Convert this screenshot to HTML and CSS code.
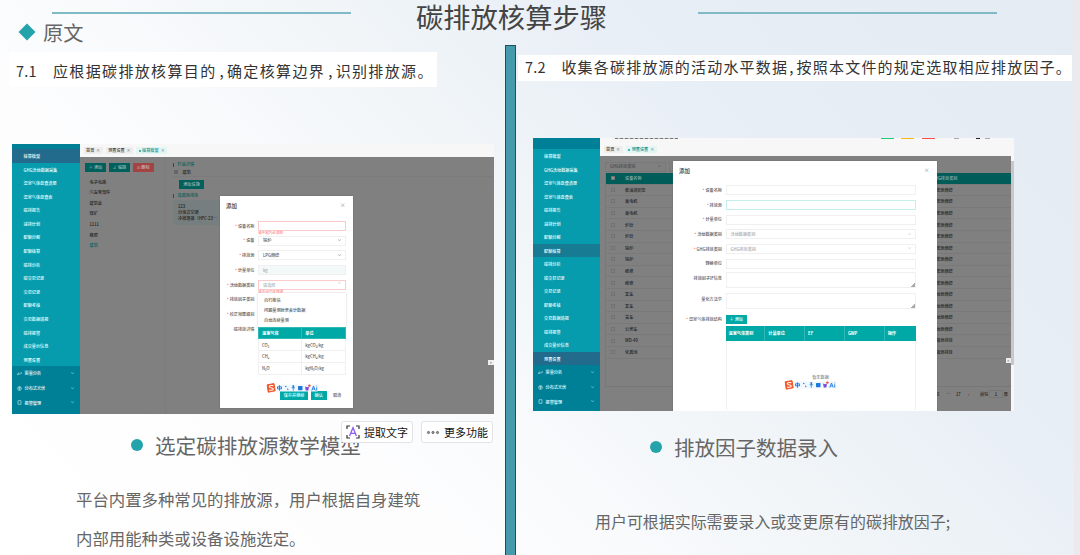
FILE: index.html
```html
<!DOCTYPE html>
<html lang="zh-CN">
<head>
  <meta charset="UTF-8">
  <meta name="viewport" content="width=device-width, initial-scale=1.0">
  <title>碳排放核算步骤</title>
  <link rel="stylesheet" href="styles.css">
</head>
<body>

  <svg class="defs" width="0" height="0">
    <symbol id="ime" viewBox="0 0 52 10">
      <rect x="11" y="1.5" width="41" height="7" rx="1" fill="#f1f7fe"/>
      <path d="M1.2 1.8 8 .6 9.2 7.8 2.2 9.2Z" fill="#f0592b" stroke="#f0592b" stroke-linejoin="round"/>
      <path d="M7.4 2.8C4.8 2.1 2.8 3 3.5 4.2 4.3 5.3 7.2 4.7 7.3 6 7.2 7.4 4.7 7.5 3.1 6.9" fill="none" stroke="#fff" stroke-width="1.1"/>
      <path d="M11.5 3.8h4v2h-4zM13.5 2.3v5.4" fill="none" stroke="#1c79db" stroke-width=".9"/>
      <path d="M19 3.6q1.2-1 1.5.5M21 6q1.2-.5 1 1.2" fill="none" stroke="#1c79db" stroke-width=".9"/>
      <path d="M27.3 2.2v2.8" fill="none" stroke="#1c79db" stroke-width="1.6"/>
      <path d="M25.6 4.5q1.7 2.4 3.4 0M27.3 6v1.8" fill="none" stroke="#1c79db" stroke-width=".7"/>
      <rect x="32" y="3" width="4.5" height="4.2" rx=".6" fill="#1c79db"/>
      <path d="M39 3.6 41 4.3 43 3.6 42.3 7.4H39.8Z" fill="#7b49d8"/>
      <circle cx="43.4" cy="2.6" r="1.2" fill="#f0483e"/>
      <path d="M45.8 7.5 47.5 3 49.2 7.5M46.4 6H48.6M50.7 4.3V7.5M50.7 2.6v.7" fill="none" stroke="#1c79db" stroke-width=".9"/>
    </symbol>
  </svg>

  <div class="slide">
    <header class="slide-head">
      <i class="rule"></i>
      <h1>碳排放核算步骤</h1>
      <i class="rule"></i>
    </header>

    <div class="columns">
      <section class="col col-left">
        <h2 class="origin"><i class="diamond"></i>原文</h2>
        <p class="quote"><b>7.1</b>应根据碳排放核算目的<s>,</s>确定核算边界<s>,</s>识别排放源。</p>

        <div class="shot shot-left">
          <aside class="side">
            <ul>
              <li class="on">核算模型</li><li>GHG活动数据采集</li><li>温室气体盘查清册</li><li>温室气体盘查表</li>
              <li>碳排报告</li><li>减排计划</li><li>配额分解</li><li>配额核算</li>
              <li>碳排分析</li><li>碳交易记录</li><li>交易记录</li><li>配额考核</li>
              <li>交易数据填报</li><li>碳排报警</li><li>成交量价信息</li><li>预置设置</li>
            </ul>
            <div class="groups">
              <p><svg viewBox="0 0 5 5"><path d="M.5 2.5V4M1.7 1.5V4M3 2V3.5M4.2 1V3"/></svg>需量分析<i class="chev"></i></p>
              <p><svg viewBox="0 0 5 5"><circle cx="2.5" cy="2.5" r="1.9"/><path d="M1 2h3M2.5.6v3.8"/></svg>分布式光伏<i class="chev"></i></p>
              <p><svg viewBox="0 0 5 5"><path d="M1 .7h3v3.6H1z"/></svg>报警管理<i class="chev"></i></p>
            </div>
          </aside>
          <div class="main">
            <div class="tabs">
              <span>首页 <em>×</em></span><span>预置设置 <em>×</em></span><span class="cur">核算模型 <em>×</em></span>
            </div>
            <div class="work">
              <div class="list">
                <div class="ops"><b>＋ 添加</b><b>∠ 编辑</b><b class="red">⊡ 删除</b></div>
                <ul>
                  <li>电子电路</li><li>汽车零部件</li><li>建筑业</li><li>煤矿</li><li>1111</li><li>橡胶</li><li class="teal">建筑</li>
                </ul>
              </div>
              <div class="detail">
                <p class="sec">行业详情</p>
                <p class="kind"><i></i>建筑</p>
                <b class="addbtn">添加设施</b>
                <p class="sec">选取源排放</p>
                <div class="card"><p>123</p><p>分体式空调</p><p>冷媒逸散（HFC-23…</p></div>
              </div>
            </div>
          </div>

          <div class="modal modal-a">
            <h3>添加<em>×</em></h3>
            <div class="row"><label class="req">设备名称</label><div class="inp bad"></div></div>
            <p class="err">请不能为必须的</p>
            <div class="row"><label class="req">设备</label><div class="inp">锅炉<i class="chev"></i></div></div>
            <div class="row"><label class="req">排放源</label><div class="inp">LPG燃烧<i class="chev"></i></div></div>
            <div class="row"><label class="req">计量单位</label><div class="inp off">kg</div></div>
            <div class="row"><label class="req">活动数据类别</label><div class="inp bad ph">请选择<i class="chev up"></i></div></div>
            <div class="row"><label class="req">排放因子类别</label></div>
            <div class="row"><label class="req">校正频率级别</label></div>
            <div class="row"><label>碳排放详情</label></div>
            <p class="err err-two">请活动气体强调</p>
            <div class="drop"><p>自行推估</p><p>问题量测财务会计数据</p><p>自动连续量测</p></div>
            <table class="gas">
              <tr><th>温室气体</th><th>单位</th></tr>
              <tr><td>CO₂</td><td>kgCO₂/kg</td></tr>
              <tr><td>CH₄</td><td>kgCH₄/kg</td></tr>
              <tr><td>N₂O</td><td>kgN₂O/kg</td></tr>
            </table>
            <div class="foot"><b>保存并继续</b><b>确认</b><b class="plain">取消</b></div>
            <svg class="ime"><use href="#ime"/></svg>
          </div>
          <i class="expand">»</i>
        </div>

        <h2 class="caption"><i class="dot"></i>选定碳排放源数学模型</h2>
        <p class="text">平台内置多种常见的排放源，用户根据自身建筑<br>内部用能种类或设备设施选定。</p>

        <div class="float-tools">
          <span><svg width="14" height="14" viewBox="0 0 14 14"><path d="M1 4V1H4M10 1H13V4M13 10V13H10M4 13H1V10" fill="none" stroke="#333" stroke-width="1.2"/><path d="M3.6 11 7 2.8 10.4 11M4.9 8.3H9.1" fill="none" stroke="#8b5cf0" stroke-width="1.3"/></svg>提取文字</span>
          <span><svg width="14" height="14" viewBox="0 0 14 14"><g fill="#999" stroke="#555" stroke-width=".8"><circle cx="2.5" cy="7.5" r="1.1"/><circle cx="7" cy="7.5" r="1.1"/><circle cx="11.5" cy="7.5" r="1.1"/></g></svg>更多功能</span>
        </div>
      </section>

      <i class="divider"></i>

      <section class="col col-right">
        <p class="quote"><b>7.2</b>收集各碳排放源的活动水平数据<s>,</s>按照本文件的规定选取相应排放因子。</p>

        <div class="shot shot-right">
          <aside class="side">
            <ul>
              <li>核算模型</li><li>GHG活动数据采集</li><li>温室气体盘查清册</li><li>温室气体盘查表</li>
              <li>碳排报告</li><li>减排计划</li><li>配额分解</li><li class="hover">配额核算</li>
              <li>碳排分析</li><li>碳交易记录</li><li>交易记录</li><li>配额考核</li>
              <li>交易数据填报</li><li>碳排报警</li><li>成交量价信息</li><li class="on">预置设置</li>
            </ul>
            <div class="groups">
              <p><svg viewBox="0 0 5 5"><path d="M.5 2.5V4M1.7 1.5V4M3 2V3.5M4.2 1V3"/></svg>需量分析<i class="chev"></i></p>
              <p><svg viewBox="0 0 5 5"><circle cx="2.5" cy="2.5" r="1.9"/><path d="M1 2h3M2.5.6v3.8"/></svg>分布式光伏<i class="chev"></i></p>
              <p><svg viewBox="0 0 5 5"><path d="M1 .7h3v3.6H1z"/></svg>报警管理<i class="chev"></i></p>
            </div>
          </aside>
          <div class="main">
            <div class="topbar">
              <i class="cut"></i><i class="chip green"></i><i class="chip amber"></i><i class="chip coral"></i><i class="mini"></i><i class="mini dark"></i><i class="mini near"></i>
            </div>
            <div class="tabs"><span>首页 <em>×</em></span><span class="cur">预置设置 <em>×</em></span></div>
            <div class="work">
              <div class="filter"><span>GHG排放类别<i class="chev"></i></span><span></span></div>
              <div class="grid">
                <div class="gr gh"><i></i><span>设备名称</span><span>GHG排放类别</span></div>
                <div class="gr"><i></i><span>柴油消防泵</span><span>固定源燃烧</span></div>
                <div class="gr"><i></i><span>发电机</span><span>固定源燃烧</span></div>
                <div class="gr"><i></i><span>发电机</span><span>固定源燃烧</span></div>
                <div class="gr"><i></i><span>炉灶</span><span>固定源燃烧</span></div>
                <div class="gr"><i></i><span>炉灶</span><span>固定源燃烧</span></div>
                <div class="gr"><i></i><span>锅炉</span><span>固定源燃烧</span></div>
                <div class="gr"><i></i><span>锅炉</span><span>固定源燃烧</span></div>
                <div class="gr"><i></i><span>维修</span><span>固定源燃烧</span></div>
                <div class="gr"><i></i><span>维修</span><span>固定源燃烧</span></div>
                <div class="gr"><i></i><span>叉车</span><span>移动源燃烧</span></div>
                <div class="gr"><i></i><span>叉车</span><span>移动源燃烧</span></div>
                <div class="gr"><i></i><span>货车</span><span>移动源燃烧</span></div>
                <div class="gr"><i></i><span>公务车</span><span>移动源燃烧</span></div>
                <div class="gr"><i></i><span>WD-40</span><span>逸散源排放</span></div>
                <div class="gr"><i></i><span>化粪池</span><span>逸散源排放</span></div>
              </div>
              <div class="pager"><b>6</b><b>…</b><b>17</b><b>›</b><span>前往</span><u>1</u><span>页</span></div>
            </div>
          </div>
          <div class="scroll"><i></i></div>

          <div class="modal modal-b">
            <h3>添加<em>×</em></h3>
            <div class="row"><label class="req">设备名称</label><div class="inp"></div></div>
            <div class="row"><label class="req">排放源</label><div class="inp focus"></div></div>
            <div class="row"><label class="req">计量单位</label><div class="inp"></div></div>
            <div class="row"><label class="req">活动数据类别</label><div class="inp ph">活动数据类别<i class="chev"></i></div></div>
            <div class="row"><label class="req">GHG排放类别</label><div class="inp ph">GHG排放类别<i class="chev"></i></div></div>
            <div class="row"><label>转换单位</label><div class="inp"></div></div>
            <div class="row tall"><label>排放因子IF信息</label><div class="inp area"></div></div>
            <div class="row tall"><label>量化方法学</label><div class="inp area"></div></div>
            <div class="row add"><label class="req">温室气体排放结构</label><b>＋ 添加</b></div>
            <div class="gases">
              <div class="cells"><span>温室气体类别</span><span>计量单位</span><span>EF</span><span>GWP</span><span>操作</span></div>
              <p>暂无数据</p>
            </div>
            <svg class="ime"><use href="#ime"/></svg>
          </div>
          <i class="expand">»</i>
        </div>

        <h2 class="caption"><i class="dot"></i>排放因子数据录入</h2>
        <p class="text">用户可根据实际需要录入或变更原有的碳排放因子;</p>
      </section>

      <i class="edge"></i>
    </div>
  </div>

</body>
</html>
```

FILE: styles.css
```css
* {
  box-sizing: border-box;
}

body, h1, h2, h3, p, ul {
  margin: 0;
  padding: 0;
}

h1, h2, h3, b, em, i {
  font-weight: normal;
  font-style: normal;
}

s, u {
  text-decoration: none;
}

ul {
  list-style: none;
}

body {
  width: 1080px;
  height: 555px;
  overflow: hidden;
  font-family: "Noto Sans CJK SC", "Noto Sans", sans-serif;
}

.defs {
  position: absolute;
}

.slide {
  width: 1080px;
  height: 555px;
  display: flex;
  flex-direction: column;
  background: linear-gradient(45deg, #fff 0%, #fdfdfe 28%, #f8fafc 40%, #eef3f7 58%, #e8eef6 72%, #e4ebf3 100%);
}

/* title */
.slide-head {
  min-height: 20px;
  flex: none;
  display: flex;
  justify-content: space-between;
  padding: 0 83px 0 52px;
}

.slide-head h1 {
  font-size: 27.3px;
  line-height: 32px;
  color: #444;
  white-space: nowrap;
  margin: 0 0 -12px -26px;
}

.rule {
  width: 299px;
  height: 2px;
  margin-top: 12px;
  background: #80bac6;
}

.columns {
  flex: 1;
  display: flex;
  min-height: 0;
}

.col {
  position: relative;
}

.col-left {
  width: 505px;
}

.col-right {
  width: 558px;
  padding-top: 35px;
}

.divider {
  width: 11px;
  margin-top: 25px;
  background: #459aac;
  border: 1px solid #1f4f5b;
  border-bottom: 0;
}

.edge {
  width: 6px;
  margin-top: -20px;
  background: #ece9ee;
}

.origin {
  height: 32px;
  padding: 0 0 9px 18px;
  display: flex;
  align-items: center;
  font-size: 20.3px;
  line-height: 24px;
  color: #666;
}

.diamond {
  width: 12px;
  height: 12px;
  margin: 0 10px 0 3px;
  background: #25a3ab;
  transform: rotate(45deg);
}

.quote {
  display: flex;
  align-items: center;
  background: #fff;
  color: #333;
  font-size: 15px;
  letter-spacing: 1.35px;
  white-space: nowrap;
}

.quote b {
  width: 37px;
  font-size: 14.5px;
  letter-spacing: .2px;
}

.quote s {
  width: 10.5px;
  padding-left: 3px;
}

.col-left .quote {
  width: 428px;
  height: 35px;
  margin-left: 9px;
  padding: 1px 0 0 7px;
}

.col-right .quote {
  width: 554px;
  height: 26px;
  margin-left: 2px;
  padding: 0 0 3px 7px;
  letter-spacing: 1.2px;
}

.col-right .quote s {
  width: 8.5px;
  padding-left: 1px;
}

.caption {
  display: flex;
  align-items: center;
  height: 30px;
  font-size: 20.5px;
  color: #666;
  white-space: nowrap;
}

.dot {
  width: 12px;
  height: 12px;
  border-radius: 50%;
  background: #25a3ab;
  margin-right: 12px;
}

.col-left .caption {
  margin: 16px 0 0 131px;
  font-size: 20.6px;
}

.col-right .caption {
  margin: 21px 0 0 134px;
}

.text {
  font-size: 16.4px;
  line-height: 39px;
  color: #666;
  white-space: nowrap;
}

.col-left .text {
  margin: 20px 0 0 76px;
}

.col-right .text {
  margin: 40px 0 0 79px;
  font-size: 15.95px;
}

.float-tools {
  position: absolute;
  left: 341px;
  top: 401px;
  display: flex;
  gap: 8px;
}

.float-tools span {
  width: 72px;
  height: 22px;
  display: flex;
  align-items: center;
  justify-content: center;
  gap: 4px;
  background: #fff;
  border: 1px solid #e4e4e6;
  border-radius: 3px;
  font-size: 11px;
  color: #111;
  white-space: nowrap;
}

/* system windows */
.shot {
  position: relative;
  display: flex;
  overflow: hidden;
  font-size: 4.15px;
  font-weight: 500;
  line-height: 1.5;
  white-space: nowrap;
}

.shot b, .shot em, .shot h3 {
  font-weight: 500;
}

.shot-left {
  width: 481.5px;
  height: 269.7px;
  margin: 57px 0 0 12px;
}

.shot-right {
  width: 481px;
  height: 273px;
  margin: 57px 0 0 17px;
}

.side {
  width: 67.5px;
  flex: none;
  padding-top: 5px;
  display: flex;
  flex-direction: column;
  background: #008097;
  color: #f0ffff;
}

.shot-right .side {
  width: 66.5px;
  padding-top: 11px;
}

.side ul {
  background: #069cad;
}

.side li {
  height: 13.59px;
  line-height: 15px;
  padding-left: 11.5px;
}

.shot-right .side li {
  height: 13.5px;
  padding-left: 11px;
}

.side .on {
  background: #236b8c;
}

.side .hover {
  background: #177b94;
}

.groups p {
  height: 14.7px;
  display: flex;
  align-items: center;
  padding: 0 6px 0 5px;
}

.groups svg {
  width: 5px;
  height: 5px;
  margin-right: 2.5px;
  fill: none;
  stroke: #cfe9ee;
  stroke-width: .6;
}

/* scaled down so the stroke gets thinner than one pixel */
.chev {
  width: 5px;
  height: 5px;
  margin: -2px -1px 0 auto;
  border: solid currentColor;
  border-width: 0 1px 1px 0;
  transform: scale(.45) rotate(45deg);
  opacity: .7;
}

.chev.up {
  transform: scale(.45) rotate(225deg);
}

.main {
  flex: 1;
  display: flex;
  flex-direction: column;
  background: #f7f7f7;
  min-width: 0;
}

.tabs {
  height: 13px;
  flex: none;
  display: flex;
  align-items: center;
  gap: 3px;
  padding-left: 4px;
}

.tabs span {
  height: 7px;
  line-height: 7px;
  padding: 0 2.5px;
  background: #eee;
  color: #444;
}

.tabs .cur {
  display: flex;
  align-items: center;
  background: #e2f6f4;
  color: #0a918c;
}

.tabs .cur::before {
  content: "";
  width: 2px;
  height: 2px;
  margin-right: 1.5px;
  border-radius: 50%;
  background: #0aa39d;
}

.tabs em {
  margin-left: .8px;
  color: #777;
}

.tabs .cur em {
  margin-left: 2px;
}

.work {
  flex: 1;
  display: flex;
  background: #808080;
  color: #222;
}

.list {
  width: 86.5px;
  padding: 5.5px 0 0 5.5px;
  border-right: 1px solid #7c7c7c;
}

.ops {
  display: flex;
  gap: 3px;
  margin-bottom: 5px;
}

.ops b {
  width: 21px;
  height: 9px;
  line-height: 9px;
  text-align: center;
  background: #00605c;
  color: #9fb5b3;
}

.ops .red {
  background: #a34444;
  color: #cbb;
}

.list li {
  height: 10.65px;
  line-height: 10.65px;
  padding-left: 4.5px;
}

.list .teal {
  color: #00605c;
}

.detail {
  flex: 1;
  padding: 4px 1px 0 7px;
}

.sec {
  height: 7.5px;
  line-height: 7.5px;
  padding-left: 4.5px;
  color: #00605c;
  background: linear-gradient(#00605c, #00605c) 0 50% / 1px 4px no-repeat;
}

.kind {
  display: flex;
  align-items: center;
  gap: 4.5px;
  height: 8.5px;
  padding-left: 1px;
  border-bottom: 1px solid #7b7b7b;
}

.kind i {
  width: 4px;
  height: 4px;
  background: #666;
}

.addbtn {
  display: block;
  width: 25px;
  height: 9px;
  line-height: 9px;
  margin: 3px 0 3px 6px;
  text-align: center;
  background: #00605c;
  color: #9fb5b3;
}

.card {
  width: 55px;
  height: 25px;
  padding: 3px 0 0 5px;
  line-height: 6.2px;
  background: #767e80;
}

.modal {
  position: absolute;
  background: #fff;
  color: #555;
  box-shadow: 0 0 1px #555;
}

.modal h3 {
  display: flex;
  justify-content: space-between;
  padding: 0 7px 0 6px;
  font-size: 5.5px;
  color: #333;
}

.modal h3 em {
  color: #999;
  position: relative;
  top: -1px;
}

.row {
  display: flex;
  align-items: center;
}

.row label {
  flex: none;
  text-align: right;
}

.req::before {
  content: "* ";
  color: #f56c6c;
}

.inp {
  display: flex;
  align-items: center;
  height: 10px;
  padding: 0 4px;
  border: 1px solid #f0f0f0;
}

.inp.bad {
  border-color: #fbcaca;
}

.inp.off {
  background: #f3f8f8;
  color: #aaa;
}

.inp.ph {
  color: #aaa;
}

.inp.focus {
  border-color: #c5eeed;
}

.modal-a {
  left: 208px;
  top: 52px;
  width: 132.5px;
  height: 211.5px;
}

.modal-a h3 {
  padding-top: 5.5px;
  height: 24.4px;
}

.modal-a .row {
  height: 14.75px;
}

.modal-a .row:first-of-type {
  height: 10.5px;
}

.modal-a label {
  width: 34.5px;
  margin-right: 3.5px;
}

.modal-a .inp {
  width: 88px;
}

.err {
  height: 2.3px;
  line-height: 3px;
  padding-left: 38px;
  font-size: 3.6px;
  color: #f88;
}

.err-two {
  position: absolute;
  top: 93.5px;
}

/* the dropdown lies over the lower form rows */
.drop {
  position: absolute;
  left: 38px;
  top: 96.5px;
  width: 87.5px;
  height: 34px;
  padding: 2.5px 6px;
  background: #fff;
  box-shadow: 0 0 2px #ccc;
  line-height: 10px;
}

.gas {
  position: absolute;
  left: 38px;
  top: 130.5px;
  width: 87.5px;
  border-collapse: collapse;
}

.gas th, .gas td {
  width: 50%;
  height: 11.75px;
  padding: 0 3px;
  text-align: left;
  border: .5px solid #f0f0f0;
}

.gas th {
  background: #00a9a5;
  color: #fff;
  border-color: #2fbab6;
}

.foot {
  position: absolute;
  left: 60px;
  bottom: 8px;
  display: flex;
  gap: 2.5px;
}

.foot b {
  height: 8.8px;
  line-height: 8.8px;
  padding: 0 3.8px;
  background: #00a9a5;
  color: #e6ffff;
}

.foot .plain {
  background: #fff;
  color: #555;
}

.ime {
  position: absolute;
  width: 52px;
  height: 10px;
}

.modal-a .ime {
  left: 45.5px;
  bottom: 15px;
}

.expand {
  position: absolute;
  right: 0;
  top: 216px;
  width: 5.5px;
  height: 5px;
  line-height: 4.5px;
  text-align: center;
  background: #eee;
  color: #555;
}

.shot-right .expand {
  right: 3px;
  top: 220px;
}

/* top bar is cut by the window edge, only the lower slivers show */
.topbar {
  height: 5px;
  flex: none;
  display: flex;
  align-items: flex-start;
}

.topbar i {
  height: 1px;
}

.cut {
  width: 63px;
  margin: 0 203px 0 15px;
  background: repeating-linear-gradient(90deg, #777 0 3px, #ccc 3px 5px);
}

.chip {
  width: 13px;
  margin-right: 7.5px;
}

.green { background: #1fcf78; }
.amber { background: #fdb813; }
.coral { background: #ff5050; }

.mini {
  width: 5px;
  margin-left: 12px;
  background: #aaa;
}

.mini.dark {
  width: 4px;
  margin-left: 17px;
  background: #222;
}

.mini.near {
  margin-left: 5px;
}

.shot-right .work {
  flex-direction: column;
  padding-left: 5.5px;
}

.filter {
  display: flex;
  gap: 3px;
  padding-top: 5.5px;
}

.filter span {
  width: 60.5px;
  height: 10px;
  display: flex;
  align-items: center;
  padding: 0 4px;
  border: 1px solid #797979;
  color: #4a4a4a;
}

.grid {
  flex: none;
  height: 213.5px;
  margin-top: 1.5px;
  border-left: 1px solid #797979;
  border-bottom: 1px solid #777;
}

.gr {
  display: flex;
  align-items: center;
  height: 11.6px;
  border-bottom: .5px solid #797979;
}

.gr i {
  width: 4px;
  height: 4px;
  margin: 0 10px 0 5px;
  border: .5px solid #727272;
}

.gr span:first-of-type {
  width: 307px;
}

.gh {
  background: #005c59;
  color: #94b3b1;
}

.gh i {
  background: #999;
}

.pager {
  display: flex;
  align-items: center;
  height: 15px;
  padding-left: 332px;
}

.pager b {
  width: 9.5px;
}

.pager b:nth-child(3) {
  width: 12px;
}

.pager u {
  width: 13.5px;
  margin: 0 1px;
  text-align: center;
  border: .5px solid #777;
}

.pager span:first-of-type {
  margin-left: 2.5px;
}

.scroll {
  width: 3.5px;
  padding-top: 23px;
  background: #f7f7f7;
}

.scroll i {
  display: block;
  height: 204px;
  background: #c8c8c8;
}

.modal-b {
  left: 140px;
  top: 23px;
  width: 263.5px;
  height: 250px;
}

.modal-b h3 {
  height: 22px;
  padding-top: 5.5px;
}

.modal-b .row {
  height: 14.65px;
}

.modal-b label {
  width: 49px;
  margin-right: 3.5px;
}

.modal-b .inp {
  width: 190px;
}

.modal-b .row.tall {
  height: 20.9px;
  align-items: flex-start;
}

.modal-b .tall label {
  padding-top: 4.5px;
}

.modal-b .area {
  height: 16px;
  margin-top: 1.5px;
  background: linear-gradient(135deg, transparent 50%, #aaa 50%) 100% 100% / 4px 4px no-repeat;
}

.modal-b .row.add {
  height: 13.5px;
}

.add b {
  width: 21.5px;
  height: 9.5px;
  line-height: 9.5px;
  text-align: center;
  background: #00a9a5;
  color: #e6ffff;
}

.gases {
  width: 190px;
  height: 84px;
  margin: 0 0 0 52.5px;
  border: solid #f0f0f0;
  border-width: 0 1px;
}

.cells {
  display: flex;
  height: 14.5px;
  line-height: 14.5px;
  margin: 0 -1px;
  background: #00a9a5;
  color: #fff;
  font-weight: bold;
}

.cells span {
  width: 39.8px;
  padding-left: 3px;
  border-right: .5px solid #2fbab6;
}

.cells span:last-child {
  width: 30px;
  border: 0;
}

.gases p {
  margin-top: 33px;
  text-align: center;
  color: #888;
}

.modal-b .ime {
  left: 111px;
  bottom: 21px;
}
```
